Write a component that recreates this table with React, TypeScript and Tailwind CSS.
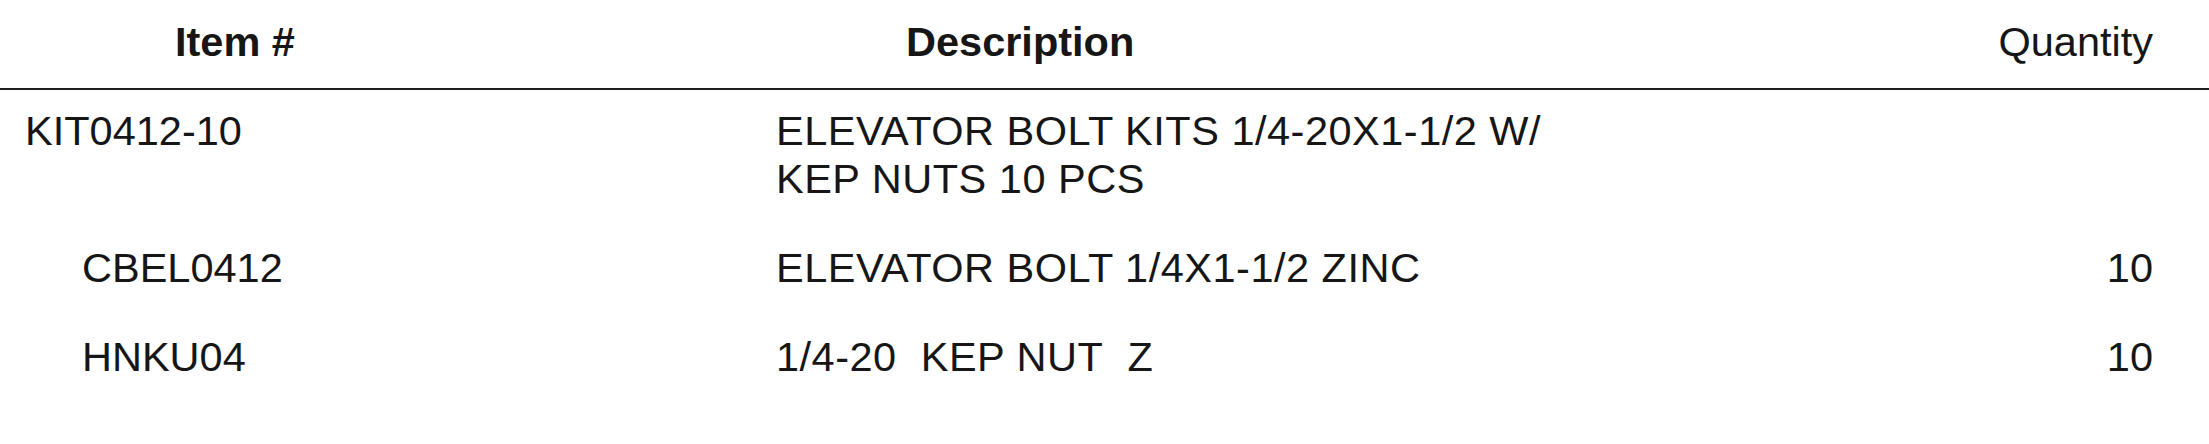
const ROWS = [
  { item: "KIT0412-10", sub: false, lines: ["ELEVATOR BOLT KITS 1/4-20X1-1/2 W/", "KEP NUTS 10 PCS"], qty: "" },
  { item: "CBEL0412", sub: true, lines: ["ELEVATOR BOLT 1/4X1-1/2 ZINC"], qty: "10" },
  { item: "HNKU04", sub: true, lines: ["1/4-20\u00a0 KEP NUT\u00a0 Z"], qty: "10" },
];

export default function App() {
  return (
    <div
      className="h-[444px] w-[2209px] bg-white text-[#161616]"
      style={{ fontFamily: '"Liberation Sans", Arial, sans-serif' }}
    >
      <header className="grid grid-cols-[776px_1fr_auto] border-b-2 border-[#1e1e1e] pb-[22px] pr-[56px] pt-[18px] text-[41.5px] leading-[48px]">
        <div className="pl-[175px] font-bold">Item #</div>
        <div className="pl-[130px] font-bold">Description</div>
        <div className="text-right">Quantity</div>
      </header>

      <div className="flex flex-col gap-y-[41px] pr-[56px] pt-[17px] text-[41.5px] leading-[48px]">
        {ROWS.map((row) => (
          <div key={row.item} className="grid grid-cols-[776px_1fr_auto]">
            <div className={row.sub ? "pl-[82px]" : "pl-[25px]"}>{row.item}</div>
            <div className="whitespace-pre tracking-[0.5px]">
              {row.lines.map((line) => (
                <div key={line}>{line}</div>
              ))}
            </div>
            <div className="text-right">{row.qty}</div>
          </div>
        ))}
      </div>
    </div>
  );
}
